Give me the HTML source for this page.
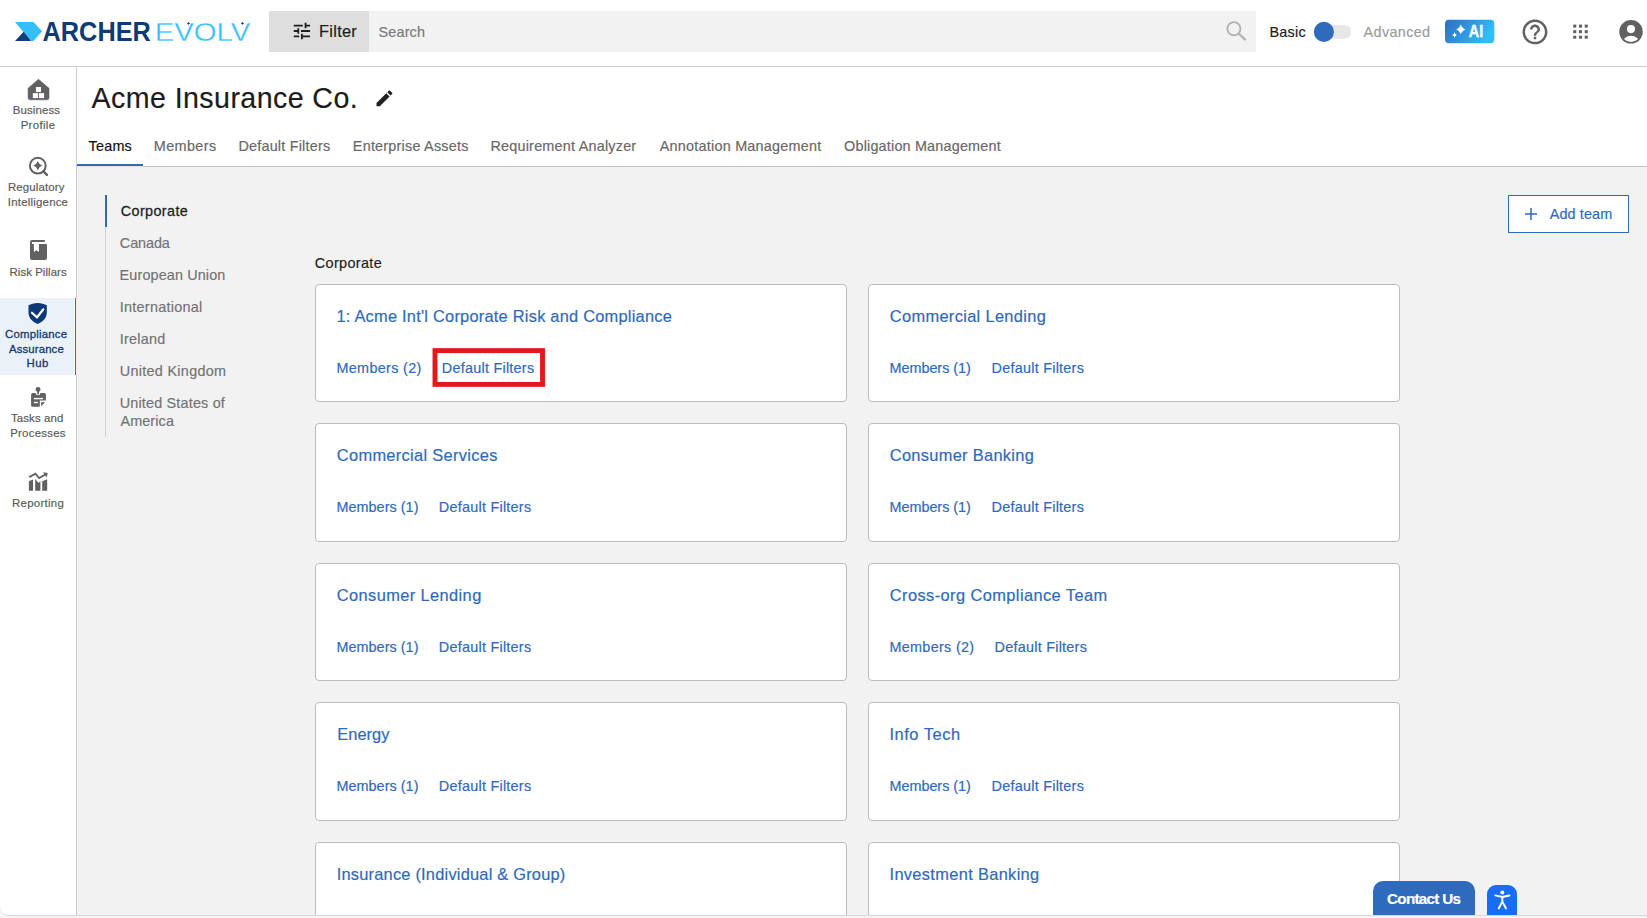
<!DOCTYPE html>
<html lang="en">
<head>
<meta charset="utf-8">
<title>Acme Insurance Co. - Teams</title>
<style>
*{box-sizing:border-box;margin:0;padding:0}
html,body{width:1647px;height:918px;overflow:hidden;background:#f2f2f2;font-family:"Liberation Sans",sans-serif;color:#1c1c1c}
body{position:relative}
.t{position:absolute;white-space:nowrap;line-height:20px;z-index:3;font-weight:normal;display:block;-webkit-text-stroke:.18px currentColor}
#hdr{position:absolute;left:0;top:0;width:1647px;height:67px;background:#fff;border-bottom:1px solid #cdcdcd}
#filter{position:absolute;left:269px;top:11px;width:100px;height:41px;background:#dedede}
#search{position:absolute;left:369px;top:11px;width:887px;height:41px;background:#f2f2f2}
#side{position:absolute;left:0;top:67px;width:77px;height:849px;background:#fff;border-right:1px solid #cdcdcd;border-bottom:1px solid #d8d8d8;border-bottom-left-radius:9px;z-index:2}
#sact{position:absolute;left:0;top:298px;width:74px;height:77px;background:#eaf1f9;z-index:2}
#sactb{position:absolute;left:74.8px;top:298px;width:1.5px;height:77px;background:#2d6bd6;z-index:2}
#sactw{position:absolute;left:76px;top:298px;width:1px;height:77px;background:#eeece6;z-index:2}
#main{position:absolute;left:77px;top:67px;width:1570px;height:100px;background:#fff;border-bottom:1px solid #c2c2c2}
#tabline{position:absolute;left:77px;top:164px;width:66px;height:2px;background:#2d6bbd;box-shadow:0 1px 0 #e6e3dd}
#lnav{position:absolute;left:105px;top:195px;width:1px;height:242px;background:#d2d2d2}
#lnavact{position:absolute;left:105px;top:195px;width:2px;height:32px;background:#2f6bbd}
#addbtn{position:absolute;left:1508px;top:195px;width:121px;height:38px;border:1px solid #2f6bbd;background:#fff}
.card{position:absolute;width:532px;background:#fff;border:1px solid #bdbdbd;border-radius:4px}
#contactbg{position:absolute;left:1373px;top:881px;width:102px;height:34px;background:#2f6bbd;border-radius:10px 10px 0 0}
#acc{position:absolute;left:1487px;top:885px;width:30px;height:30px;background:#186df6;border-radius:9px 9px 0 0}
#bot{position:absolute;left:77px;top:915px;width:1570px;height:3px;background:#f5f5f5;border-top:1px solid #d8d8d8;z-index:4}
#blc{position:absolute;left:0;top:905px;width:12px;height:13px;background:#f5f5f5;z-index:1}
#gfx{position:absolute;left:0;top:0;z-index:2}
</style>
</head>
<body>
<header>
<div id="hdr"><div id="filter"></div><div id="search"></div></div>
<span class="t" id="h_filter" style="left:319.07px;top:20.92px;font-size:16.4px;color:#1c1c1c;letter-spacing:0.259px;">Filter</span>
<span class="t" id="h_search" style="left:378.60px;top:21.91px;font-size:14.4px;color:#7a7a7a;letter-spacing:0.151px;">Search</span>
<span class="t" id="h_basic" style="left:1269.44px;top:21.61px;font-size:14.4px;color:#1c1c1c;letter-spacing:0.270px;">Basic</span>
<span class="t" id="h_adv" style="left:1363.61px;top:21.61px;font-size:14.4px;color:#9b9b9b;letter-spacing:0.345px;">Advanced</span>
</header>
<nav>
<div id="blc"></div><div id="side"></div><div id="sact"></div><div id="sactw"></div><div id="sactb"></div>
<a class="t" id="sb0" style="left:12.68px;top:99.85px;font-size:11.4px;color:#5a5a5a;letter-spacing:0.168px;">Business</a>
<a class="t" id="sb1" style="left:20.68px;top:114.65px;font-size:11.4px;color:#5a5a5a;letter-spacing:0.345px;">Profile</a>
<a class="t" id="sb2" style="left:7.97px;top:176.85px;font-size:11.4px;color:#5a5a5a;letter-spacing:0.149px;">Regulatory</a>
<a class="t" id="sb3" style="left:7.85px;top:191.95px;font-size:11.4px;color:#5a5a5a;letter-spacing:0.225px;">Intelligence</a>
<a class="t" id="sb4" style="left:9.54px;top:261.85px;font-size:11.4px;color:#5a5a5a;letter-spacing:0.072px;">Risk Pillars</a>
<a class="t" id="sb5" style="left:5.06px;top:323.85px;font-size:11.4px;color:#14376f;letter-spacing:0.209px;-webkit-text-stroke:.28px currentColor;">Compliance</a>
<a class="t" id="sb6" style="left:8.91px;top:338.75px;font-size:11.4px;color:#14376f;letter-spacing:0.133px;-webkit-text-stroke:.28px currentColor;">Assurance</a>
<a class="t" id="sb7" style="left:26.57px;top:352.65px;font-size:11.4px;color:#14376f;letter-spacing:0.378px;-webkit-text-stroke:.28px currentColor;">Hub</a>
<a class="t" id="sb8" style="left:10.97px;top:408.15px;font-size:11.4px;color:#5a5a5a;letter-spacing:0.139px;">Tasks and</a>
<a class="t" id="sb9" style="left:10.13px;top:423.15px;font-size:11.4px;color:#5a5a5a;letter-spacing:0.272px;">Processes</a>
<a class="t" id="sb10" style="left:11.97px;top:493.15px;font-size:11.4px;color:#5a5a5a;letter-spacing:0.302px;">Reporting</a>
</nav>
<main>
<div id="main"></div><div id="tabline"></div>
<h1 class="t" id="title" style="left:91.56px;top:88.09px;font-size:28.6px;color:#1c1c1c;letter-spacing:0.418px;">Acme Insurance Co.</h1>
<nav>
<a class="t" id="tab0" style="left:88.44px;top:135.91px;font-size:14.4px;color:#111;letter-spacing:0.249px;">Teams</a>
<a class="t" id="tab1" style="left:153.76px;top:135.91px;font-size:14.4px;color:#686868;letter-spacing:0.404px;">Members</a>
<a class="t" id="tab2" style="left:238.43px;top:135.91px;font-size:14.4px;color:#686868;letter-spacing:0.208px;">Default Filters</a>
<a class="t" id="tab3" style="left:352.85px;top:135.91px;font-size:14.4px;color:#686868;letter-spacing:0.223px;">Enterprise Assets</a>
<a class="t" id="tab4" style="left:490.44px;top:135.91px;font-size:14.4px;color:#686868;letter-spacing:0.217px;">Requirement Analyzer</a>
<a class="t" id="tab5" style="left:659.77px;top:135.91px;font-size:14.4px;color:#686868;letter-spacing:0.233px;">Annotation Management</a>
<a class="t" id="tab6" style="left:844.09px;top:135.91px;font-size:14.4px;color:#686868;letter-spacing:0.188px;">Obligation Management</a>
</nav>
<aside>
<div id="lnav"></div><div id="lnavact"></div>
<a class="t" id="ln0" style="left:120.73px;top:201.41px;font-size:14.4px;color:#1f1f1f;letter-spacing:0.385px;-webkit-text-stroke:.28px currentColor;">Corporate</a>
<a class="t" id="ln1" style="left:119.86px;top:232.81px;font-size:14.4px;color:#727272;letter-spacing:-0.086px;">Canada</a>
<a class="t" id="ln2" style="left:119.62px;top:264.81px;font-size:14.4px;color:#727272;letter-spacing:0.130px;">European Union</a>
<a class="t" id="ln3" style="left:119.71px;top:296.61px;font-size:14.4px;color:#727272;letter-spacing:0.282px;">International</a>
<a class="t" id="ln4" style="left:119.71px;top:328.61px;font-size:14.4px;color:#727272;letter-spacing:0.272px;">Ireland</a>
<a class="t" id="ln5" style="left:119.70px;top:360.61px;font-size:14.4px;color:#727272;letter-spacing:0.310px;">United Kingdom</a>
<a class="t" id="ln6" style="left:119.70px;top:392.61px;font-size:14.4px;color:#727272;letter-spacing:0.186px;">United States of</a>
<a class="t" id="ln7" style="left:120.42px;top:411.11px;font-size:14.4px;color:#727272;letter-spacing:0.123px;">America</a>
</aside>
<div id="addbtn"></div>
<span class="t" id="addteam" style="left:1549.77px;top:203.81px;font-size:14.4px;color:#2e69ba;letter-spacing:0.114px;">Add team</span>
<section>
<h2 class="t" id="sect" style="left:314.86px;top:253.41px;font-size:14.4px;color:#1c1c1c;letter-spacing:0.358px;">Corporate</h2>
<article>
<div class="card" style="left:315px;top:284px;height:118px"></div>
<h3 class="t" id="c00_t" style="left:336.41px;top:306.12px;font-size:16.4px;color:#2e69ba;letter-spacing:0.233px;">1: Acme Int'l Corporate Risk and Compliance</h3>
<a class="t" id="c00_m" style="left:336.43px;top:358.11px;font-size:14.4px;color:#2e69ba;letter-spacing:0.328px;">Members (2)</a>
<a class="t" id="c00_d" style="left:441.85px;top:358.11px;font-size:14.4px;color:#2e69ba;letter-spacing:0.249px;">Default Filters</a>
</article>
<article>
<div class="card" style="left:868px;top:284px;height:118px"></div>
<h3 class="t" id="c01_t" style="left:889.77px;top:306.12px;font-size:16.4px;color:#2e69ba;letter-spacing:0.338px;">Commercial Lending</h3>
<a class="t" id="c01_m" style="left:889.44px;top:358.11px;font-size:14.4px;color:#2e69ba;letter-spacing:-0.010px;">Members (1)</a>
<a class="t" id="c01_d" style="left:991.62px;top:358.11px;font-size:14.4px;color:#2e69ba;letter-spacing:0.246px;">Default Filters</a>
</article>
<article>
<div class="card" style="left:315px;top:423px;height:119px"></div>
<h3 class="t" id="c10_t" style="left:336.83px;top:445.12px;font-size:16.4px;color:#2e69ba;letter-spacing:0.319px;">Commercial Services</h3>
<a class="t" id="c10_m" style="left:336.43px;top:497.41px;font-size:14.4px;color:#2e69ba;letter-spacing:0.045px;">Members (1)</a>
<a class="t" id="c10_d" style="left:438.85px;top:497.41px;font-size:14.4px;color:#2e69ba;letter-spacing:0.249px;">Default Filters</a>
</article>
<article>
<div class="card" style="left:868px;top:423px;height:119px"></div>
<h3 class="t" id="c11_t" style="left:889.77px;top:445.12px;font-size:16.4px;color:#2e69ba;letter-spacing:0.314px;">Consumer Banking</h3>
<a class="t" id="c11_m" style="left:889.44px;top:497.41px;font-size:14.4px;color:#2e69ba;letter-spacing:-0.010px;">Members (1)</a>
<a class="t" id="c11_d" style="left:991.62px;top:497.41px;font-size:14.4px;color:#2e69ba;letter-spacing:0.246px;">Default Filters</a>
</article>
<article>
<div class="card" style="left:315px;top:563px;height:118px"></div>
<h3 class="t" id="c20_t" style="left:336.83px;top:585.12px;font-size:16.4px;color:#2e69ba;letter-spacing:0.395px;">Consumer Lending</h3>
<a class="t" id="c20_m" style="left:336.43px;top:637.11px;font-size:14.4px;color:#2e69ba;letter-spacing:0.045px;">Members (1)</a>
<a class="t" id="c20_d" style="left:438.85px;top:637.11px;font-size:14.4px;color:#2e69ba;letter-spacing:0.249px;">Default Filters</a>
</article>
<article>
<div class="card" style="left:868px;top:563px;height:118px"></div>
<h3 class="t" id="c21_t" style="left:889.77px;top:585.12px;font-size:16.4px;color:#2e69ba;letter-spacing:0.417px;">Cross-org Compliance Team</h3>
<a class="t" id="c21_m" style="left:889.44px;top:637.11px;font-size:14.4px;color:#2e69ba;letter-spacing:0.310px;">Members (2)</a>
<a class="t" id="c21_d" style="left:994.62px;top:637.11px;font-size:14.4px;color:#2e69ba;letter-spacing:0.246px;">Default Filters</a>
</article>
<article>
<div class="card" style="left:315px;top:702px;height:119px"></div>
<h3 class="t" id="c30_t" style="left:337.27px;top:724.12px;font-size:16.4px;color:#2e69ba;letter-spacing:0.034px;">Energy</h3>
<a class="t" id="c30_m" style="left:336.43px;top:776.41px;font-size:14.4px;color:#2e69ba;letter-spacing:0.045px;">Members (1)</a>
<a class="t" id="c30_d" style="left:438.85px;top:776.41px;font-size:14.4px;color:#2e69ba;letter-spacing:0.249px;">Default Filters</a>
</article>
<article>
<div class="card" style="left:868px;top:702px;height:119px"></div>
<h3 class="t" id="c31_t" style="left:889.49px;top:724.12px;font-size:16.4px;color:#2e69ba;letter-spacing:0.554px;">Info Tech</h3>
<a class="t" id="c31_m" style="left:889.44px;top:776.41px;font-size:14.4px;color:#2e69ba;letter-spacing:-0.010px;">Members (1)</a>
<a class="t" id="c31_d" style="left:991.62px;top:776.41px;font-size:14.4px;color:#2e69ba;letter-spacing:0.246px;">Default Filters</a>
</article>
<article>
<div class="card" style="left:315px;top:842px;height:80px"></div>
<h3 class="t" id="c40_t" style="left:336.74px;top:864.12px;font-size:16.4px;color:#2e69ba;letter-spacing:0.216px;">Insurance (Individual &amp; Group)</h3>
</article>
<article>
<div class="card" style="left:868px;top:842px;height:80px"></div>
<h3 class="t" id="c41_t" style="left:889.49px;top:864.12px;font-size:16.4px;color:#2e69ba;letter-spacing:0.338px;">Investment Banking</h3>
</article>
</section>
</main>
<div id="contactbg"></div>
<span class="t" id="contact" style="left:1387.08px;top:889.33px;font-size:15.2px;color:#ffffff;letter-spacing:-0.710px;font-weight:bold;">Contact Us</span>
<div id="acc"></div><div id="bot"></div>
<svg id="gfx" width="1647" height="918" viewBox="0 0 1647 918">
<defs><linearGradient id="aig" x1="0" y1="0" x2="1" y2="0.35"><stop offset="0" stop-color="#2f6cc4"/><stop offset="1" stop-color="#30bdf8"/></linearGradient></defs>
<polygon points="15,22 33.5,22 42.1,31.35 33.5,40.9 31.1,40.9" fill="#35bfff"/>
<polygon points="15,40.9 23.65,31.75 31.1,40.9" fill="#0f3d7f"/>
<text id="lg_archer" x="42.60" y="40.9" font-family="Liberation Sans, sans-serif" font-weight="bold" font-size="26.8" textLength="108.20" lengthAdjust="spacingAndGlyphs" fill="#0d3a78">ARCHER</text>
<text id="lg_evolv" x="154.70" y="40.75" font-family="Liberation Sans, sans-serif" font-size="26.2" textLength="95.50" lengthAdjust="spacingAndGlyphs" fill="#35bfff" stroke="#fff" stroke-width="0.3">EVOLV</text>
<rect x="187.5" y="22.4" width="2" height="2" transform="rotate(45 188.5 23.4)" fill="#0d2f6a"/>
<rect x="241.5" y="22.4" width="2" height="2" transform="rotate(45 242.5 23.4)" fill="#0d2f6a"/>
<path transform="translate(291.05,20.1) scale(0.906)" d="M3 17v2h6v-2H3zM3 5v2h10V5H3zm10 16v-2h8v-2h-8v-2h-2v6h2zM7 9v2H3v2h4v2h2V9H7zm14 4v-2H11v2h10zm-6-4h2V7h4V5h-4V3h-2v6z" fill="#1f1f1f"/>
<circle cx="1233.9" cy="28.7" r="6.55" fill="none" stroke="#b2b2b2" stroke-width="1.9"/>
<line x1="1238.7" y1="33.5" x2="1245.6" y2="40.2" stroke="#b2b2b2" stroke-width="2.3"/>
<rect x="1317" y="25.1" width="34.1" height="13.7" rx="6.85" fill="#e7e7e7"/>
<circle cx="1323.9" cy="31.9" r="10.05" fill="#2f6bbd"/>
<rect x="1445" y="19.8" width="49.3" height="23.5" rx="4" fill="url(#aig)"/>
<path d="M1460.80,24.20 Q1461.90,28.20 1465.60,29.40 Q1461.90,30.60 1460.80,34.60 Q1459.70,30.60 1456.00,29.40 Q1459.70,28.20 1460.80,24.20 Z" fill="#fff"/>
<path d="M1454.55,32.00 Q1455.08,34.31 1456.85,35.00 Q1455.08,35.69 1454.55,38.00 Q1454.02,35.69 1452.25,35.00 Q1454.02,34.31 1454.55,32.00 Z" fill="#fff"/>
<text id="ai_txt" x="1468.80" y="36.7" font-family="Liberation Sans, sans-serif" font-weight="bold" font-size="16.4" textLength="14.40" lengthAdjust="spacingAndGlyphs" fill="#fff" stroke="#fff" stroke-width="0.35">AI</text>
<path transform="translate(1520.05,16.95) scale(1.245)" d="M11 18h2v-2h-2v2zm1-16C6.48 2 2 6.48 2 12s4.48 10 10 10 10-4.48 10-10S17.52 2 12 2zm0 18c-4.41 0-8-3.59-8-8s3.59-8 8-8 8 3.59 8 8-3.59 8-8 8zm0-14c-2.21 0-4 1.79-4 4h2c0-1.1.9-2 2-2s2 .9 2 2c0 2-3 1.75-3 5h2c0-2.25 3-2.5 3-5 0-2.21-1.79-4-4-4z" fill="#616161"/>
<rect x="1573.20" y="24.60" width="3.1" height="3.0" fill="#616161"/>
<rect x="1573.20" y="30.15" width="3.1" height="3.0" fill="#616161"/>
<rect x="1573.20" y="35.70" width="3.1" height="3.0" fill="#616161"/>
<rect x="1578.95" y="24.60" width="3.1" height="3.0" fill="#616161"/>
<rect x="1578.95" y="30.15" width="3.1" height="3.0" fill="#616161"/>
<rect x="1578.95" y="35.70" width="3.1" height="3.0" fill="#616161"/>
<rect x="1584.70" y="24.60" width="3.1" height="3.0" fill="#616161"/>
<rect x="1584.70" y="30.15" width="3.1" height="3.0" fill="#616161"/>
<rect x="1584.70" y="35.70" width="3.1" height="3.0" fill="#616161"/>
<clipPath id="acl"><circle cx="1631" cy="31.85" r="10.1"/></clipPath>
<circle cx="1631" cy="31.85" r="11.75" fill="#616161"/>
<circle cx="1631" cy="29.1" r="4.05" fill="#fff"/>
<ellipse cx="1631" cy="43.2" rx="8.6" ry="7.4" fill="#fff" clip-path="url(#acl)"/>
<path transform="translate(373.85,87.75) scale(0.883)" d="M3 17.25V21h3.75L17.81 9.94l-3.75-3.75L3 17.25zM20.71 7.04c.39-.39.39-1.02 0-1.41l-2.34-2.34c-.39-.39-1.02-.39-1.41 0l-1.83 1.83 3.75 3.75 1.83-1.83z" fill="#212121"/>
<path d="M38.5,79.3 L49,88.3 V97.8 a2,2 0 0 1 -2,2 H30.1 a2,2 0 0 1 -2,-2 V88.3 Z" fill="#616161" stroke="#616161" stroke-width="0.6" stroke-linejoin="round"/>
<rect x="35.9" y="87" width="5.1" height="5" fill="#fff"/><rect x="32.8" y="93.1" width="5.2" height="5" fill="#fff"/><rect x="38.9" y="93.1" width="5.2" height="5" fill="#fff"/>
<circle cx="37.8" cy="165.7" r="7.9" fill="none" stroke="#616161" stroke-width="2"/>
<line x1="43.6" y1="171.5" x2="46.9" y2="174.9" stroke="#616161" stroke-width="2.5" stroke-linecap="round"/>
<path d="M37.80,161.00 Q39.03,164.31 42.20,165.60 Q39.03,166.89 37.80,170.20 Q36.57,166.89 33.40,165.60 Q36.57,164.31 37.80,161.00 Z" fill="#616161"/>
<path d="M32,240.1 H44.8 V242 H31.9 V244 H46 a1,1 0 0 1 1,1 V258.1 a2,2 0 0 1 -2,2 H32 a2,2 0 0 1 -2,-2 V242.1 a2,2 0 0 1 2,-2 Z" fill="#616161"/>
<polygon points="33.9,243.5 38.9,243.5 38.9,252 36.4,250.2 33.9,252" fill="#fff"/>
<path d="M37.65,303 C41,303 44.6,304 46.8,305.3 V312.3 C46.8,318 43,322 37.65,323.9 C32.3,322 28.5,318 28.5,312.3 V305.3 C30.7,304 34.3,303 37.65,303 Z" fill="#0b3876"/>
<polyline points="31.9,312.7 37,317.4 43.3,309.3" fill="none" stroke="#fff" stroke-width="2.2" stroke-linecap="round" stroke-linejoin="miter"/>
<path d="M32.6,392.9 H35.6 A2.45,2.45 0 0 0 40.5,392.9 H44.4 a1.5,1.5 0 0 1 1.5,1.5 V400.5 H39.8 V406.8 H32.6 a1.5,1.5 0 0 1 -1.5,-1.5 V394.4 a1.5,1.5 0 0 1 1.5,-1.5 Z" fill="#616161"/>
<circle cx="38.05" cy="389.4" r="2.45" fill="#616161"/><rect x="37.2" y="389.4" width="1.7" height="5" fill="#616161"/>
<polygon points="41.1,402.2 45.1,402.2 41.1,406.2" fill="#616161"/>
<rect x="33.9" y="397.9" width="9.2" height="1.4" fill="#fff"/><rect x="33.9" y="401.8" width="3.9" height="1.4" fill="#fff"/>
<polygon points="28.9,481.2 33,479.4 33,490.8 28.9,490.8" fill="#616161"/>
<polygon points="35.2,479 38.5,482.9 40.4,481 40.4,490.8 35.2,490.8" fill="#616161"/>
<polygon points="42.2,481.2 47.2,479.2 47.2,490.8 42.2,490.8" fill="#616161"/>
<polyline points="29.2,477.2 35.5,473.7 39.1,478 45.3,474.5" fill="none" stroke="#616161" stroke-width="1.9" stroke-linejoin="miter"/>
<polygon points="43.1,472.2 47.8,472.9 46.5,477.4" fill="#616161"/>
<path d="M1525,214 H1537 M1531,208 V220" stroke="#2e69ba" stroke-width="1.5" fill="none"/>
<rect x="435" y="350.6" width="107.5" height="33.8" fill="none" stroke="#e2191c" stroke-width="4.9"/>
<circle cx="1502.3" cy="892.6" r="2" fill="#fff"/>
<path d="M1495.3,895.4 L1502.3,897 L1509.4,895.4 M1502.3,897 V902.4 M1502.3,901.6 L1498.8,908.3 M1502.3,901.6 L1505.9,908.3" stroke="#fff" stroke-width="2.0" fill="none" stroke-linecap="round" stroke-linejoin="round"/>
</svg>
</body>
</html>
